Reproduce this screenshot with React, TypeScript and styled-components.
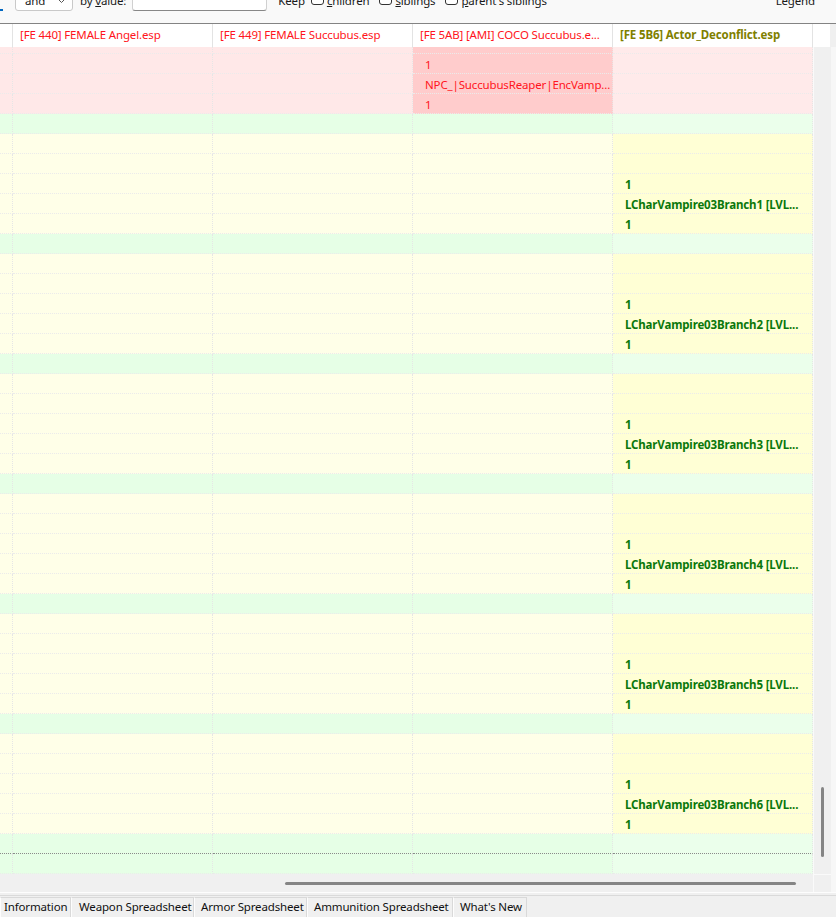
import styled, { createGlobalStyle } from 'styled-components';

type Kind = 'red' | 'green' | 'yellow';

interface RowData {
  kind: Kind;
  c3?: string;
  c4?: string;
  focus?: boolean;
}

const GlobalStyle = createGlobalStyle`
  html, body { margin: 0; padding: 0; background: #f0f0f0; }
  body {
    font-family: "Noto Sans", "Segoe UI", sans-serif;
    font-size: 11.5px;
    letter-spacing: -0.15px;
    color: #1a1a1a;
  }
`;

const COLS = [13, 200, 200, 200, 200];

const Window = styled.div`
  width: 836px;
  height: 917px;
  display: flex;
  flex-direction: column;
  overflow: hidden;
  background: #f0f0f0;
`;

/* --- filter toolbar (scrolled, top cut off) --- */

const Toolbar = styled.div`
  flex: none;
  height: 23px;
  background: #f9f9f9;
  border-bottom: 1px solid #838383;
  overflow: hidden;
`;

const ToolRow = styled.div`
  display: flex;
  align-items: center;
  height: 21px;
  margin-top: -10px;
  white-space: nowrap;
`;

const FocusTail = styled.div`
  width: 3px;
  height: 21px;
  box-sizing: border-box;
  border-bottom: 2px solid #0067c0;
`;

const Combo = styled.div`
  width: 58px;
  height: 21px;
  margin-left: 12px;
  box-sizing: border-box;
  border: 1px solid #c9c9c9;
  border-radius: 3px;
  background: #fff;
  display: flex;
  align-items: center;
  justify-content: space-between;
  padding: 0 6px 0 9px;
`;

const Label = styled.span<{ $ml: number }>`
  margin-left: ${(p) => p.$ml}px;
  color: #1a1a1a;
`;

const Edit = styled.div`
  width: 135px;
  height: 21px;
  margin-left: 6px;
  box-sizing: border-box;
  border: 1px solid #d0d0d0;
  border-bottom-color: #878787;
  border-radius: 3px;
  background: #fff;
`;

const Check = styled.span<{ $ml: number }>`
  align-self: flex-start;
  margin-top: 2px;
  margin-left: ${(p) => p.$ml}px;
  width: 13px;
  height: 13px;
  box-sizing: border-box;
  border: 1px solid #333;
  border-radius: 3px;
  background: #fff;
`;

const Legend = styled.span`
  margin-left: auto;
  margin-right: 21px;
`;

/* --- grid --- */

const Header = styled.div`
  flex: none;
  height: 23px;
  display: flex;
  background: #fff;
`;

const HeadCell = styled.div<{ $w: number; $tone?: 'red' | 'olive' }>`
  width: ${(p) => p.$w}px;
  flex: none;
  box-sizing: border-box;
  border-right: 1px solid #e3e3e3;
  padding-left: 7px;
  line-height: 22px;
  white-space: nowrap;
  overflow: hidden;
  color: ${(p) => (p.$tone === 'olive' ? '#7f7f00' : '#ff1420')};
  font-weight: ${(p) => (p.$tone === 'olive' ? 700 : 400)};
`;

const HeadRest = styled.div`
  flex: 1;
  border-right: 6px solid #f0f0f0;
  background: #fff;
`;

const Body = styled.div`
  flex: none;
  height: 827px;
  display: flex;
  overflow: hidden;
`;

const Grid = styled.div`
  width: 813px;
  flex: none;
  overflow: hidden;
`;

const Rows = styled.div`
  margin-top: -13px;
`;

const Row = styled.div`
  display: flex;
  height: 20px;
`;

const bg = (kind: Kind, col: number) => {
  if (kind === 'red') return col === 3 ? '#ffcccc' : col === 4 ? '#ffeaea' : '#ffe8e8';
  if (kind === 'green') return col === 4 ? '#ebffeb' : '#e6ffe6';
  return col === 4 ? '#ffffd5' : '#ffffe8';
};

const Cell = styled.div<{ $w: number; $kind: Kind; $col: number; $focus?: boolean }>`
  width: ${(p) => p.$w}px;
  flex: none;
  box-sizing: border-box;
  height: 20px;
  background: ${(p) => bg(p.$kind, p.$col)};
  border-right: 1px dotted #e6e6e6;
  border-bottom: 1px dotted ${(p) => (p.$focus ? '#8a8a8a' : '#ebebeb')};
  padding: 1px 0 0 12px;
  line-height: 19px;
  white-space: nowrap;
  overflow: hidden;
  text-overflow: ellipsis;
  color: ${(p) => (p.$kind === 'red' ? '#ff1420' : '#0b780b')};
  font-weight: ${(p) => (p.$kind === 'red' ? 400 : 700)};
`;

const VScroll = styled.div`
  width: 17px;
  flex: none;
  background: #f0f0f0;
  border-left: 1px solid #fafafa;
`;

const VThumb = styled.div`
  width: 3px;
  height: 70px;
  margin: 740px 0 0 7px;
  border-radius: 2px;
  background: #858585;
`;

const Edge = styled.div`
  flex: 1;
  background: #f7f7f7;
`;

const HBar = styled.div`
  flex: none;
  height: 18px;
  display: flex;
`;

const HScroll = styled.div`
  width: 813px;
  flex: none;
  background: #f0f0f0;
  padding-top: 8px;
  box-sizing: border-box;
`;

const HThumb = styled.div`
  width: 511px;
  height: 3px;
  margin-left: 285px;
  border-radius: 2px;
  background: #858585;
`;

const Corner = styled.div`
  width: 17px;
  flex: none;
  background: #f0f0f0;
  border-left: 1px solid #fafafa;
  border-top: 1px solid #fafafa;
`;

const Split = styled.div`
  flex: none;
  height: 4px;
  border-top: 1px solid #fdfdfd;
  border-bottom: 1px solid #dadada;
  box-sizing: border-box;
`;

/* --- bottom tabs --- */

const Tabs = styled.div`
  flex: 1;
  display: flex;
  padding-top: 1px;
`;

const Tab = styled.div<{ $w: number; $pl: number }>`
  width: ${(p) => p.$w}px;
  flex: none;
  box-sizing: border-box;
  padding-left: ${(p) => p.$pl}px;
  border: 1px solid #d9d9d9;
  border-bottom: none;
  border-left-color: #fdfdfd;
  background: #f0f0f0;
  line-height: 18px;
  white-space: nowrap;
  overflow: hidden;
  color: #111;
`;

const rows: RowData[] = [
  { kind: 'red' },
  { kind: 'red', c3: '1' },
  { kind: 'red', c3: 'NPC_|SuccubusReaper|EncVamp...' },
  { kind: 'red', c3: '1' },
];
for (let i = 1; i <= 6; i++) {
  rows.push(
    { kind: 'green' },
    { kind: 'yellow' },
    { kind: 'yellow' },
    { kind: 'yellow', c4: '1' },
    { kind: 'yellow', c4: `LCharVampire03Branch${i} [LVL...` },
    { kind: 'yellow', c4: '1' },
  );
}
rows.push({ kind: 'green', focus: true }, { kind: 'green' });

const headers = [
  '',
  '[FE 440] FEMALE Angel.esp',
  '[FE 449] FEMALE Succubus.esp',
  '[FE 5AB] [AMI] COCO Succubus.e...',
  '[FE 5B6] Actor_Deconflict.esp',
];

const tabs = [
  { label: 'Information', w: 71, pl: 3 },
  { label: 'Weapon Spreadsheet', w: 123, pl: 7 },
  { label: 'Armor Spreadsheet', w: 113, pl: 6 },
  { label: 'Ammunition Spreadsheet', w: 146, pl: 6 },
  { label: "What's New", w: 74, pl: 6 },
];

export default function App() {
  return (
    <Window>
      <GlobalStyle />
      <Toolbar>
        <ToolRow>
          <FocusTail />
          <Combo>
            <span>and</span>
            <svg width="9" height="6" viewBox="0 0 9 6">
              <path d="M1 1l3.5 3.5L8 1" fill="none" stroke="#555" strokeWidth="1" />
            </svg>
          </Combo>
          <Label $ml={7}>
            by <u>v</u>alue:
          </Label>
          <Edit />
          <Label $ml={11}>Keep</Label>
          <Check $ml={6} />
          <Label $ml={3}>
            <u>c</u>hildren
          </Label>
          <Check $ml={10} />
          <Label $ml={3}>
            <u>s</u>iblings
          </Label>
          <Check $ml={10} />
          <Label $ml={3}>
            <u>p</u>arent's siblings
          </Label>
          <Legend>Legend</Legend>
        </ToolRow>
      </Toolbar>

      <Header>
        {headers.map((h, i) => (
          <HeadCell key={i} $w={COLS[i]} $tone={i === 4 ? 'olive' : 'red'}>
            {h}
          </HeadCell>
        ))}
        <HeadRest />
      </Header>

      <Body>
        <Grid>
          <Rows>
            {rows.map((r, ri) => (
              <Row key={ri}>
                {COLS.map((w, ci) => (
                  <Cell key={ci} $w={w} $kind={r.kind} $col={ci} $focus={r.focus}>
                    {ci === 3 ? r.c3 : ci === 4 ? r.c4 : null}
                  </Cell>
                ))}
              </Row>
            ))}
          </Rows>
        </Grid>
        <VScroll>
          <VThumb />
        </VScroll>
        <Edge />
      </Body>

      <HBar>
        <HScroll>
          <HThumb />
        </HScroll>
        <Corner />
        <Edge />
      </HBar>
      <Split />

      <Tabs>
        {tabs.map((t) => (
          <Tab key={t.label} $w={t.w} $pl={t.pl}>
            {t.label}
          </Tab>
        ))}
      </Tabs>
    </Window>
  );
}
